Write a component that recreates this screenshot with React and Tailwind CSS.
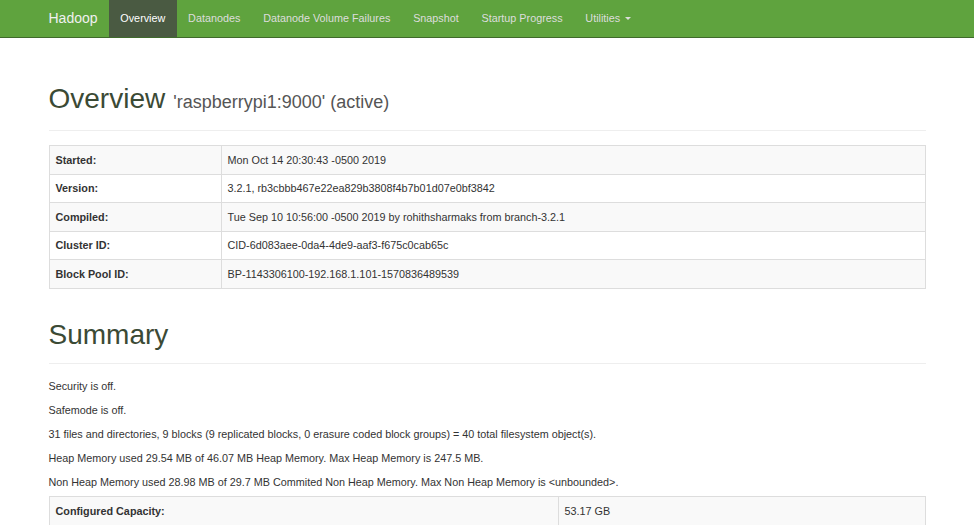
import React from 'react';

const navItems = ['Datanodes', 'Datanode Volume Failures', 'Snapshot', 'Startup Progress'];

const overviewRows = [
  ['Started:', 'Mon Oct 14 20:30:43 -0500 2019'],
  ['Version:', '3.2.1, rb3cbbb467e22ea829b3808f4b7b01d07e0bf3842'],
  ['Compiled:', 'Tue Sep 10 10:56:00 -0500 2019 by rohithsharmaks from branch-3.2.1'],
  ['Cluster ID:', 'CID-6d083aee-0da4-4de9-aaf3-f675c0cab65c'],
  ['Block Pool ID:', 'BP-1143306100-192.168.1.101-1570836489539'],
];

const summaryLines = [
  'Security is off.',
  'Safemode is off.',
  '31 files and directories, 9 blocks (9 replicated blocks, 0 erasure coded block groups) = 40 total filesystem object(s).',
  'Heap Memory used 29.54 MB of 46.07 MB Heap Memory. Max Heap Memory is 247.5 MB.',
  'Non Heap Memory used 28.98 MB of 29.7 MB Commited Non Heap Memory. Max Non Heap Memory is <unbounded>.',
];

const PageHeader = ({ title, sub }) => (
  <div className="pb-[12px] border-b border-[#eeeeee]">
    <h1 className="text-[28px] leading-[32px] text-[#3b4a35] font-normal">
      {title}
      {sub && <small className="ml-[8px] text-[18px] text-[#555555]">{sub}</small>}
    </h1>
  </div>
);

const InfoTable = ({ rows, labelWidth }) => (
  <table className="w-full border-collapse border border-[#dddddd] text-[10.8px]">
    <tbody>
      {rows.map(([label, value], i) => (
        <tr key={label} className={`h-[28.6px] ${i % 2 === 0 ? 'bg-[#f9f9f9]' : 'bg-white'}`}>
          <th className={`${labelWidth} text-left font-bold text-[#333333] px-[6px] border border-[#dddddd]`}>
            {label}
          </th>
          <td className="px-[6px] text-[#333333] border border-[#dddddd]">{value}</td>
        </tr>
      ))}
    </tbody>
  </table>
);

export default function App() {
  return (
    <div className="min-h-screen bg-white text-[#333333] font-['Liberation_Sans',Arial,sans-serif]">
      {/* top navbar */}
      <nav className="h-[38px] bg-[#5fa33e] border-b border-[#3f6a2b]">
        <div className="w-[877px] mx-auto flex items-stretch h-full">
          <a className="flex items-center pr-[11.4px] text-[14px] text-[#f0f0f0]">Hadoop</a>
          <a className="flex items-center px-[11.4px] text-[10.8px] text-white bg-[#4a5a42]">Overview</a>
          {navItems.map((item) => (
            <a key={item} className="flex items-center px-[11.4px] text-[10.8px] text-[#dddddd]">
              {item}
            </a>
          ))}
          <a className="flex items-center px-[11.4px] text-[10.8px] text-[#dddddd]">
            Utilities
            <span className="ml-[5px] w-0 h-0 border-l-[3px] border-r-[3px] border-t-[3px] border-l-transparent border-r-transparent border-t-[#dddddd]" />
          </a>
        </div>
      </nav>

      <div className="w-[877px] mx-auto">
        <div className="pt-[45px]">
          <PageHeader title="Overview" sub="'raspberrypi1:9000' (active)" />
        </div>
        <div className="mt-[14px]">
          <InfoTable rows={overviewRows} labelWidth="w-[172px]" />
        </div>

        <div className="pt-[30px]">
          <PageHeader title="Summary" />
        </div>
        <div className="mt-[10px] text-[10.8px]">
          {summaryLines.map((line) => (
            <p key={line} className="leading-[24px]">{line}</p>
          ))}
        </div>
        <div className="mt-[2px]">
          <InfoTable rows={[['Configured Capacity:', '53.17 GB']]} labelWidth="w-[509px]" />
        </div>
      </div>
    </div>
  );
}
